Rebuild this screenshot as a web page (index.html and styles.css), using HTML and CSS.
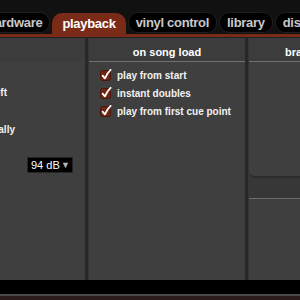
FILE: index.html
```html
<!DOCTYPE html>
<html lang="en">
<head>
    <meta charset="UTF-8">
    <meta name="viewport" content="width=device-width, initial-scale=1.0">
    <title>Preferences - playback</title>
    <link rel="stylesheet" href="styles.css">
</head>
<body>
    <nav class="tabs">
        <span class="tab first">hardware</span>
        <span class="tab active">playback</span>
        <span class="tab">vinyl control</span>
        <span class="tab">library</span>
        <span class="tab">display</span>
    </nav>
    <div class="tab-line"></div>

    <main class="panels">
        <section class="col col-left">
            <div class="col-head plain"></div>
            <div class="col-body">
                <div class="cut-label first-label">sync to left</div>
                <div class="cut-label second-label">adjust gain automatically</div>
                <div class="select">
                    <span class="value">94 dB</span>
                    <span class="arrow">&#9660;</span>
                </div>
            </div>
        </section>

        <div class="sep"></div>

        <section class="col col-mid">
            <div class="col-head">on song load</div>
            <div class="col-body checks">
                <label class="check">
                    <svg width="12" height="12" viewBox="0 0 12 12"><rect x="0.5" y="1.5" width="10" height="10" rx="2" fill="#6d2514" stroke="#4c170b"/><path d="M2.6 6.6 L4.9 9.4 Q7 4.2 10.6 0.8" fill="none" stroke="#fff" stroke-width="1.8" stroke-linecap="round" stroke-linejoin="round"/></svg>
                    play from start
                </label>
                <label class="check">
                    <svg width="12" height="12" viewBox="0 0 12 12"><rect x="0.5" y="1.5" width="10" height="10" rx="2" fill="#6d2514" stroke="#4c170b"/><path d="M2.6 6.6 L4.9 9.4 Q7 4.2 10.6 0.8" fill="none" stroke="#fff" stroke-width="1.8" stroke-linecap="round" stroke-linejoin="round"/></svg>
                    instant doubles
                </label>
                <label class="check">
                    <svg width="12" height="12" viewBox="0 0 12 12"><rect x="0.5" y="1.5" width="10" height="10" rx="2" fill="#6d2514" stroke="#4c170b"/><path d="M2.6 6.6 L4.9 9.4 Q7 4.2 10.6 0.8" fill="none" stroke="#fff" stroke-width="1.8" stroke-linecap="round" stroke-linejoin="round"/></svg>
                    play from first cue point
                </label>
            </div>
        </section>

        <div class="sep"></div>

        <section class="col col-right">
            <div class="col-head left">brake</div>
            <div class="col-body">
                <div class="inner-box"></div>
                <div class="inner-strip"></div>
            </div>
        </section>
    </main>

    <footer class="bottom">
        <div class="bottom-line"></div>
    </footer>
</body>
</html>
```

FILE: styles.css
```css
body {
    margin: 0;
    width: 300px;
    height: 300px;
    overflow: hidden;
    background-color: #0d0d0d;
    font-family: "Liberation Sans", Arial, sans-serif;
    color: #f2f2f2;
}
.tabs {
    height: 34px;
    display: flex;
    align-items: flex-end;
    gap: 2px;
    background-color: #111;
    white-space: nowrap;
    overflow: hidden;
}
.tab {
    box-sizing: border-box;
    height: 21px;
    margin-bottom: 1px;
    line-height: 19px;
    padding: 0 7px;
    border: 1px solid #1e1e1e;
    border-radius: 10px;
    background-color: #000;
    color: #c9c9c9;
    font-size: 13px;
    font-weight: bold;
    letter-spacing: -0.3px;
    flex-shrink: 0;
}
.tab.first {
    margin-left: -21px;
}
.tab.active {
    height: 21px;
    margin-bottom: 0;
    line-height: 21px;
    padding: 0 10px;
    border: none;
    border-radius: 10px 10px 0 0;
    background-color: #7a2b17;
    color: #fff;
}
.tab-line {
    height: 3px;
    background-color: #7a2b17;
    border-bottom: 1px solid #222;
}
.panels {
    display: flex;
    height: 242px;
    background-color: #3f3f3f;
}
.col {
    display: flex;
    flex-direction: column;
    flex-shrink: 0;
}
.col-left {
    width: 85px;
}
.col-mid {
    width: 156px;
}
.col-right {
    flex: 1 1 0;
    min-width: 0;
    overflow: hidden;
}
.sep {
    flex-shrink: 0;
    width: 3px;
    background-color: #282828;
    border-right: 1px solid #353535;
}
.col-head {
    box-sizing: border-box;
    height: 24px;
    padding-top: 5px;
    line-height: 18px;
    text-align: center;
    font-size: 11px;
    font-weight: bold;
    color: #fff;
    border-bottom: 1px solid #6f6f6f;
    background-color: #3c3c3c;
}
.col-head.plain {
    border-bottom-color: #3d3d3d;
}
.col-head.left {
    text-align: left;
    padding-left: 36px;
    white-space: nowrap;
}
.col-body {
    flex: 1;
}
.cut-label {
    width: 130px;
    line-height: 14px;
    text-align: right;
    white-space: nowrap;
    font-size: 10px;
    font-weight: bold;
}
.first-label {
    margin-top: 24px;
    margin-left: -123px;
}
.second-label {
    margin-top: 23px;
    margin-left: -115px;
}
.select {
    box-sizing: border-box;
    display: flex;
    justify-content: space-between;
    align-items: center;
    width: 46px;
    height: 16px;
    margin: 20px 0 0 27px;
    padding: 0 2px 0 3px;
    background-color: #000;
    border: 1px solid #262626;
    font-size: 11px;
    color: #fff;
    white-space: nowrap;
}
.select .arrow {
    font-size: 9px;
    color: #b5b5b5;
}
.checks {
    padding-top: 4px;
}
.check {
    display: flex;
    align-items: center;
    gap: 5px;
    height: 18px;
    padding-left: 11px;
    font-size: 10px;
    font-weight: bold;
    color: #f2f2f2;
    white-space: nowrap;
}
.col-right .col-body {
    background-color: #3f3f3f;
}
.inner-box {
    height: 114px;
    background-color: #3f3f3f;
    border-bottom: 2px solid #2c2c2c;
    border-bottom-left-radius: 6px;
    box-shadow: 0 2px 0 #373737;
}
.inner-strip {
    height: 20px;
    background-color: #373737;
    border-bottom: 1px solid #6c6c6c;
}
.bottom {
    height: 20px;
    background-color: #000;
    display: flex;
    flex-direction: column;
    justify-content: flex-end;
}
.bottom-line {
    height: 4px;
    border-top: 2px solid #474747;
    background-color: #2a1b1a;
}
```
